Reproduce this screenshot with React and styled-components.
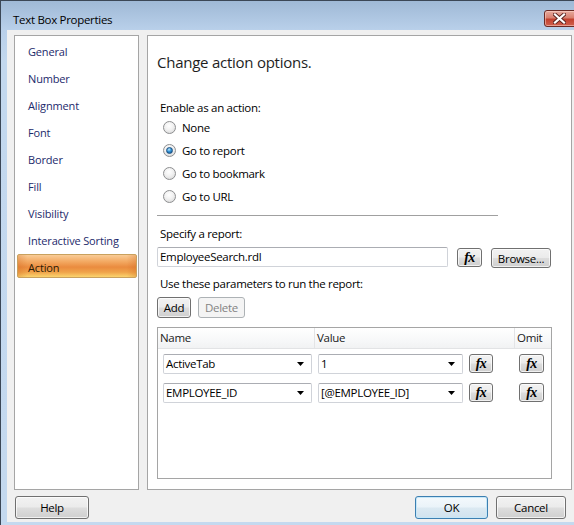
import React from 'react';
import styled, { createGlobalStyle, css } from 'styled-components';

const FONT = `"Open Sans", "Noto Sans", "Liberation Sans", sans-serif`;

const Global = createGlobalStyle`
  html, body { margin: 0; padding: 0; background: #ffffff; }
  body { font-family: ${FONT}; font-size: 11.5px; letter-spacing: -0.3px; color: #000; }
  * { box-sizing: border-box; }
`;

const Viewport = styled.div`
  width: 574px;
  height: 525px;
  overflow: hidden;
`;

const Window = styled.div`
  width: 587px;
  height: 525px;
  display: flex;
  flex-direction: column;
  padding: 0 7px 3px 6px;
  border-top: 1px solid #3b4756;
  border-left: 1px solid #3b4756;
  background: linear-gradient(to bottom, #9fb9d6 0px, #b9d0ea 29px, #c3d8ee 60px, #c4d9ef 100%);
`;

const TitleBar = styled.div`
  height: 29px;
  flex: none;
  display: flex;
  align-items: flex-start;
`;

const TitleText = styled.div`
  padding: 10px 0 0 6px;
  font-size: 11.5px;
  line-height: 17px;
  color: #000;
`;

const CloseButton = styled.div`
  margin: 9px 0 0 auto;
  width: 36px;
  height: 17px;
  border: 1px solid #6a2a25;
  border-radius: 3px;
  background: linear-gradient(to bottom, #e7ab9f 0%, #d88070 45%, #c2412f 55%, #d0604e 100%);
  box-shadow: inset 0 0 0 1px rgba(255, 220, 210, 0.5);
  display: flex;
  align-items: center;
  justify-content: center;
  padding-right: 6px;
`;

const Client = styled.div`
  flex: 1;
  background: #f0f0f0;
  display: flex;
  flex-direction: column;
  padding: 5px 8px 0 7px;
`;

const TopRow = styled.div`
  height: 455px;
  flex: none;
  display: flex;
  gap: 8px;
`;

const NavPanel = styled.div`
  width: 125px;
  flex: none;
  background: #fff;
  border: 1px solid #a5a5a5;
  padding: 2px 1px 0 2px;
  display: flex;
  flex-direction: column;
  gap: 3px;
`;

const NavItem = styled.div`
  height: 24px;
  line-height: 22px;
  padding: 2px 0 0 10px;
  color: #1c2a6b;
  font-size: 11px;
  letter-spacing: -0.15px;
  border: 1px solid transparent;
  border-radius: 2px;
  ${(p) =>
    p.$active &&
    css`
      color: #2a1a05;
      border-color: #c9a15e;
      background:
        linear-gradient(to right, rgba(200, 90, 20, 0.25) 0%, rgba(0, 0, 0, 0) 8%, rgba(0, 0, 0, 0) 92%, rgba(200, 90, 20, 0.25) 100%),
        linear-gradient(to bottom, #f9cc97 0%, #f3a962 30%, #ea8b3f 55%, #f0a34a 78%, #fbd56e 100%);
    `}
`;

const MainPanel = styled.div`
  flex: 1;
  background: #fff;
  border: 1px solid #a5a5a5;
  display: flex;
  flex-direction: column;
  padding-left: 9px;
`;

const Heading = styled.div`
  margin-top: 16px;
  height: 20px;
  line-height: 20px;
  font-size: 15px;
  letter-spacing: -0.25px;
  color: #1e1e1e;
`;

const Label = styled.div`
  margin-top: ${(p) => p.$mt}px;
  margin-left: 3px;
  height: 16px;
  line-height: 16px;
`;

const RadioGroup = styled.div`
  display: flex;
  flex-direction: column;
  padding-left: 6px;
`;

const RadioRow = styled.div`
  height: 23px;
  display: flex;
  align-items: center;
  gap: 6px;
`;

const RadioCircle = styled.span`
  width: 13px;
  height: 13px;
  flex: none;
  border-radius: 50%;
  border: 1px solid #8d8e90;
  background: radial-gradient(circle at 45% 35%, #ffffff 0%, #f1f1f1 45%, #d2d2d2 100%);
  display: flex;
  align-items: center;
  justify-content: center;
`;

const RadioDot = styled.span`
  width: 7px;
  height: 7px;
  border-radius: 50%;
  background: radial-gradient(circle at 40% 30%, #bfe8fc 0%, #3393d6 45%, #0d4a82 100%);
  border: 1px solid #1b4f80;
`;

const Separator = styled.div`
  margin-top: 7px;
  width: 341px;
  height: 1px;
  background: #a0a0a0;
`;

const Row = styled.div`
  margin-top: ${(p) => p.$mt}px;
  display: flex;
  align-items: flex-start;
  gap: ${(p) => p.$gap}px;
`;

const TextBox = styled.div`
  width: ${(p) => p.$w}px;
  height: 20px;
  border: 1px solid #d0d3d9;
  border-top-color: #abadb3;
  border-radius: 2px;
  background: #fff;
  line-height: 18px;
  padding-left: 2px;
  display: flex;
  align-items: center;
  flex: none;
`;

const BoxText = styled.span`
  flex: 1;
  white-space: nowrap;
`;

const Arrow = styled.svg`
  margin-right: 7px;
  flex: none;
`;

const Button = styled.div`
  width: ${(p) => p.$w}px;
  height: ${(p) => p.$h || 21}px;
  margin-top: ${(p) => p.$mt || 0}px;
  flex: none;
  border: 1px solid #707070;
  border-radius: 3px;
  background: linear-gradient(to bottom, #f2f2f2 0%, #ebebeb 48%, #dddddd 52%, #cfcfcf 100%);
  box-shadow: inset 0 0 0 1px rgba(255, 255, 255, 0.7);
  display: flex;
  align-items: center;
  justify-content: center;
  color: #000;
  ${(p) =>
    p.$disabled &&
    css`
      border-color: #adb2b5;
      background: #f4f4f4;
      box-shadow: none;
      color: #838383;
    `}
  ${(p) =>
    p.$default &&
    css`
      border-color: #3c7fb1;
      box-shadow: inset 0 0 0 1px #c6e7f8;
      background: linear-gradient(to bottom, #f4f9fc 0%, #eaf3f9 48%, #dbe9f2 52%, #d0e2ee 100%);
    `}
`;

const Fx = styled.span`
  font-family: "Liberation Serif", "DejaVu Serif", serif;
  font-weight: bold;
  font-style: italic;
  font-size: 14px;
  line-height: 14px;
  color: #000;
  letter-spacing: -0.5px;
`;

const Table = styled.div`
  margin-top: 9px;
  width: 395px;
  height: 152px;
  border: 1px solid #a5a5a5;
  display: flex;
  flex-direction: column;
`;

const TableHeader = styled.div`
  height: 21px;
  display: grid;
  grid-template-columns: 156px 200px 37px;
  background: linear-gradient(to bottom, #ffffff 0%, #f7f8f9 60%, #f1f2f3 100%);
  border-bottom: 1px solid #e2e3e5;
`;

const HeaderCell = styled.div`
  line-height: 20px;
  padding-left: ${(p) => p.$pl}px;
  border-left: ${(p) => (p.$first ? 'none' : '1px solid #e3e4e6')};
  color: #1a1a1a;
`;

const TableRow = styled.div`
  height: 29px;
  display: grid;
  grid-template-columns: 156px 200px 37px;
  padding-top: 5px;
`;

const Cell = styled.div`
  display: flex;
  align-items: flex-start;
  gap: 6px;
  padding-left: ${(p) => p.$pl}px;
`;

const BottomRow = styled.div`
  margin-top: 6px;
  height: 23px;
  flex: none;
  display: flex;
  gap: 8px;
  padding: 0 6px 0 1px;
`;

const Spacer = styled.div`
  flex: 1;
`;

const navItems = [
  'General',
  'Number',
  'Alignment',
  'Font',
  'Border',
  'Fill',
  'Visibility',
  'Interactive Sorting',
  'Action',
];

const radios = [
  { label: 'None' },
  { label: 'Go to report', checked: true },
  { label: 'Go to bookmark' },
  { label: 'Go to URL' },
];

const params = [
  { name: 'ActiveTab', value: '1' },
  { name: 'EMPLOYEE_ID', value: '[@EMPLOYEE_ID]' },
];

const DropArrow = () => (
  <Arrow width="7" height="4" viewBox="0 0 7 4">
    <path d="M0 0 H7 L3.5 4 Z" fill="#000" />
  </Arrow>
);

const FxButton = ({ w = 25, h = 19 }) => (
  <Button $w={w} $h={h}>
    <Fx>fx</Fx>
  </Button>
);

export default function App() {
  return (
    <Viewport>
      <Global />
      <Window>
        <TitleBar>
          <TitleText>Text Box Properties</TitleText>
          <CloseButton>
            <svg width="13" height="11" viewBox="0 0 13 11">
              <path
                d="M2 1.5 L11 9.5 M11 1.5 L2 9.5"
                stroke="#5a2420"
                strokeWidth="4"
                strokeLinecap="square"
              />
              <path
                d="M2 1.5 L11 9.5 M11 1.5 L2 9.5"
                stroke="#ffffff"
                strokeWidth="2.2"
                strokeLinecap="square"
              />
            </svg>
          </CloseButton>
        </TitleBar>
        <Client>
          <TopRow>
            <NavPanel>
              {navItems.map((n) => (
                <NavItem key={n} $active={n === 'Action'}>
                  {n}
                </NavItem>
              ))}
            </NavPanel>
            <MainPanel>
              <Heading>Change action options.</Heading>
              <Label $mt={28}>Enable as an action:</Label>
              <RadioGroup>
                {radios.map((r) => (
                  <RadioRow key={r.label}>
                    <RadioCircle>{r.checked && <RadioDot />}</RadioCircle>
                    {r.label}
                  </RadioRow>
                ))}
              </RadioGroup>
              <Separator />
              <Label $mt={10}>Specify a report:</Label>
              <Row $mt={5} $gap={9}>
                <TextBox $w={291}>
                  <BoxText>EmployeeSearch.rdl</BoxText>
                </TextBox>
                <Button $w={25} $h={19} $mt={1}>
                  <Fx>fx</Fx>
                </Button>
                <Button $w={60} $h={20} $mt={1}>
                  Browse...
                </Button>
              </Row>
              <Label $mt={8}>Use these parameters to run the report:</Label>
              <Row $mt={5} $gap={7}>
                <Button $w={34}>Add</Button>
                <Button $w={47} $disabled>
                  Delete
                </Button>
              </Row>
              <Table>
                <TableHeader>
                  <HeaderCell $first $pl={2}>
                    Name
                  </HeaderCell>
                  <HeaderCell $pl={2}>Value</HeaderCell>
                  <HeaderCell $pl={2}>Omit</HeaderCell>
                </TableHeader>
                {params.map((p) => (
                  <TableRow key={p.name}>
                    <Cell $pl={5}>
                      <TextBox $w={149}>
                        <BoxText>{p.name}</BoxText>
                        <DropArrow />
                      </TextBox>
                    </Cell>
                    <Cell $pl={4}>
                      <TextBox $w={145}>
                        <BoxText>{p.value}</BoxText>
                        <DropArrow />
                      </TextBox>
                      <FxButton w={24} />
                    </Cell>
                    <Cell $pl={5}>
                      <FxButton w={25} />
                    </Cell>
                  </TableRow>
                ))}
              </Table>
            </MainPanel>
          </TopRow>
          <BottomRow>
            <Button $w={74} $h={23}>
              Help
            </Button>
            <Spacer />
            <Button $w={73} $h={23} $default>
              OK
            </Button>
            <Button $w={70} $h={23}>
              Cancel
            </Button>
          </BottomRow>
        </Client>
      </Window>
    </Viewport>
  );
}
